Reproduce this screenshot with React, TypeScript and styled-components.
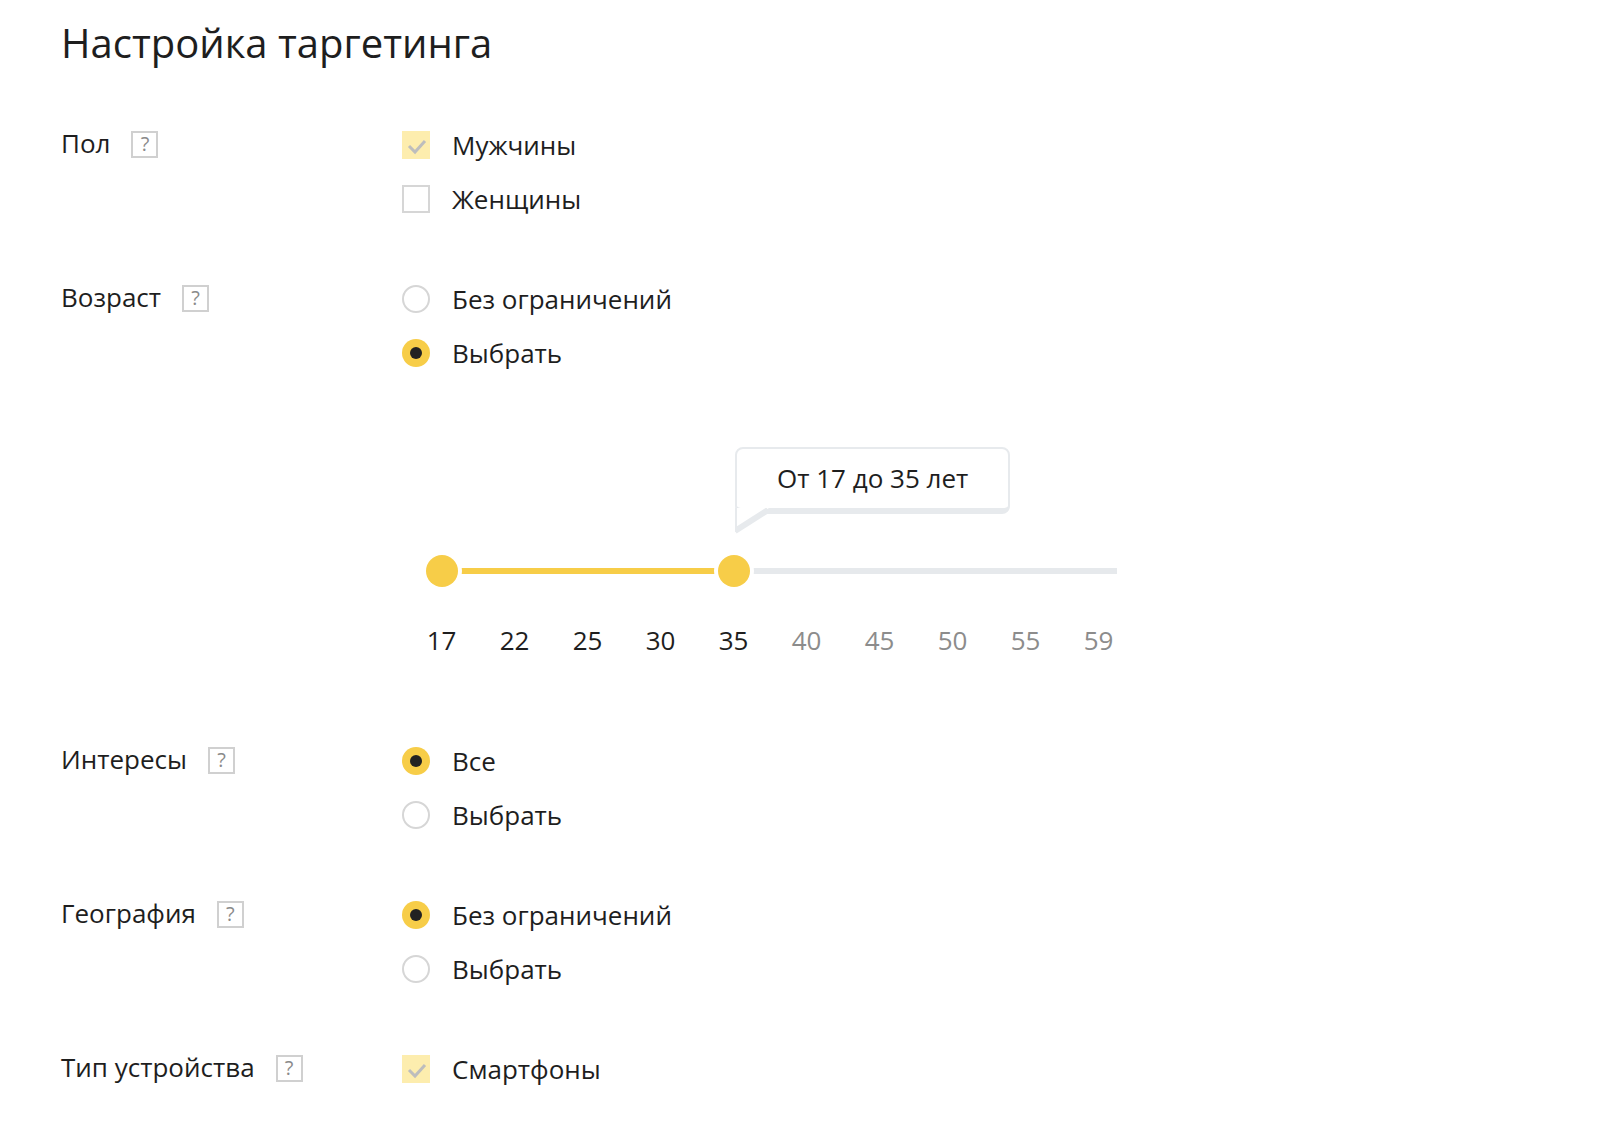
import React from "react";
import styled, { createGlobalStyle } from "styled-components";

type Option = { label: string; checked?: boolean };
type Section = {
  title: string;
  kind: "check" | "radio";
  options: Option[];
  slider?: boolean;
};

const sections: Section[] = [
  { title: "Пол", kind: "check", options: [{ label: "Мужчины", checked: true }, { label: "Женщины" }] },
  {
    title: "Возраст",
    kind: "radio",
    options: [{ label: "Без ограничений" }, { label: "Выбрать", checked: true }],
    slider: true,
  },
  { title: "Интересы", kind: "radio", options: [{ label: "Все", checked: true }, { label: "Выбрать" }] },
  {
    title: "География",
    kind: "radio",
    options: [{ label: "Без ограничений", checked: true }, { label: "Выбрать" }],
  },
  { title: "Тип устройства", kind: "check", options: [{ label: "Смартфоны", checked: true }] },
];

const ages = [17, 22, 25, 30, 35, 40, 45, 50, 55, 59];
const STEP = 73;
const RAIL_END = 712;
const range: [number, number] = [0, 4];
const center = (i: number) => STEP / 2 + i * STEP;

const AgeSlider = () => {
  const lo = center(range[0]);
  const hi = center(range[1]);
  return (
    <SliderWrapper>
      <Bubble style={{ marginLeft: hi + 1.5 }}>
        От {ages[range[0]]} до {ages[range[1]]} лет
        <Tail width="34" height="26" viewBox="0 0 34 26">
          <polygon points="2,0 34,0 2,20" fill="#fff" />
          <line x1="33" y1="2" x2="0" y2="23" stroke="#e7eaed" strokeWidth="6" />
          <rect x="0" y="0" width="2" height="24" fill="#e7eaed" />
        </Tail>
      </Bubble>
      <Track>
        <Rail style={{ left: lo, width: RAIL_END - lo }} />
        <RailFill style={{ left: lo, width: hi - lo }} />
        <Thumb style={{ left: lo - 16 }} />
        <Thumb style={{ left: hi - 16 }} />
      </Track>
      <Marks>
        {ages.map((age, i) => (
          <Mark key={age} $active={i >= range[0] && i <= range[1]}>
            {age}
          </Mark>
        ))}
      </Marks>
    </SliderWrapper>
  );
};

const App = () => {
  return (
    <Page>
      <GlobalStyle />
      <Title>Настройка таргетинга</Title>
      <Form>
        {sections.map((section) => (
          <Row key={section.title}>
            <LabelCell>
              {section.title}
              <Hint>?</Hint>
            </LabelCell>
            <div>
              <Options>
                {section.options.map((option) => (
                  <OptionRow key={option.label}>
                    {section.kind === "check" ? (
                      <CheckBox $checked={option.checked}>
                        {option.checked && (
                          <svg width="28" height="28" viewBox="0 0 28 28">
                            <polyline
                              points="7,15 13,21 23,10"
                              fill="none"
                              stroke="#bdbdbd"
                              strokeWidth="3"
                            />
                          </svg>
                        )}
                      </CheckBox>
                    ) : (
                      <RadioButton $checked={option.checked} />
                    )}
                    {option.label}
                  </OptionRow>
                ))}
              </Options>
              {section.slider && <AgeSlider />}
            </div>
          </Row>
        ))}
      </Form>
    </Page>
  );
};

const GlobalStyle = createGlobalStyle`
  body {
    margin: 0;
    background: #fff;
    font-family: "Open Sans", "Noto Sans", sans-serif;
    color: #1e1e1e;
  }
`;

const Page = styled.div`
  padding: 16px 61px 40px;
`;

const Title = styled.h1`
  margin: 0;
  font-size: 40px;
  line-height: 54px;
  font-weight: 400;
  color: #1e1e1e;
`;

const Form = styled.div`
  display: flex;
  flex-direction: column;
  gap: 72px;
  margin-top: 61px;
`;

const Row = styled.div`
  display: grid;
  grid-template-columns: 341px 1fr;
  align-items: start;
`;

const LabelCell = styled.div`
  display: flex;
  align-items: center;
  height: 28px;
  margin-top: -2px;
  font-size: 26px;
  line-height: 28px;
  white-space: nowrap;
`;

const Hint = styled.span`
  display: flex;
  align-items: center;
  justify-content: center;
  width: 27px;
  height: 27px;
  margin-left: 21px;
  margin-top: 2px;
  box-sizing: border-box;
  border: 2px solid #d0d0d0;
  font-size: 20px;
  line-height: 1;
  color: #8a8a8a;
`;

const Options = styled.div`
  display: flex;
  flex-direction: column;
  gap: 26px;
`;

const OptionRow = styled.label`
  display: flex;
  align-items: center;
  gap: 22px;
  height: 28px;
  font-size: 26px;
  line-height: 28px;
  color: #1e1e1e;
`;

const CheckBox = styled.span<{ $checked?: boolean }>`
  display: flex;
  flex: none;
  width: 28px;
  height: 28px;
  box-sizing: border-box;
  border: ${({ $checked }) => ($checked ? "none" : "2px solid #d6d6d6")};
  background: ${({ $checked }) => ($checked ? "#fdedae" : "#fff")};
`;

const RadioButton = styled.span<{ $checked?: boolean }>`
  display: flex;
  align-items: center;
  justify-content: center;
  flex: none;
  width: 28px;
  height: 28px;
  box-sizing: border-box;
  border-radius: 50%;
  border: ${({ $checked }) => ($checked ? "none" : "2px solid #d6d6d6")};
  background: ${({ $checked }) => ($checked ? "#f7cd48" : "#fff")};

  &::after {
    content: "";
    display: ${({ $checked }) => ($checked ? "block" : "none")};
    width: 12px;
    height: 12px;
    border-radius: 50%;
    background: #222;
  }
`;

const SliderWrapper = styled.div`
  width: ${STEP * ages.length}px;
  margin: 80px 0 0 3px;
  padding-bottom: 21px;
`;

const Bubble = styled.div`
  position: relative;
  width: fit-content;
  box-sizing: border-box;
  padding: 15px 40px 16px;
  border: 2px solid #e7eaed;
  border-bottom-width: 6px;
  border-radius: 8px;
  background: #fff;
  font-size: 26px;
  line-height: 28px;
  white-space: nowrap;
`;

const Tail = styled.svg`
  position: absolute;
  left: -2px;
  top: 100%;
`;

const Track = styled.div`
  position: relative;
  height: 32px;
  margin-top: 41px;
`;

const Rail = styled.div`
  position: absolute;
  top: 13px;
  height: 6px;
  background: #e6e9ec;
`;

const RailFill = styled(Rail)`
  background: #f7cd48;
`;

const Thumb = styled.div`
  position: absolute;
  top: 0;
  width: 32px;
  height: 32px;
  border-radius: 50%;
  background: #f7cd48;
  box-shadow: 0 0 0 4px #fff;
`;

const Marks = styled.div`
  display: flex;
  margin-top: 39px;
`;

const Mark = styled.span<{ $active?: boolean }>`
  width: ${STEP}px;
  text-align: center;
  font-size: 26px;
  line-height: 28px;
  color: ${({ $active }) => ($active ? "#1e1e1e" : "#8c8c8c")};
`;

export default App;
